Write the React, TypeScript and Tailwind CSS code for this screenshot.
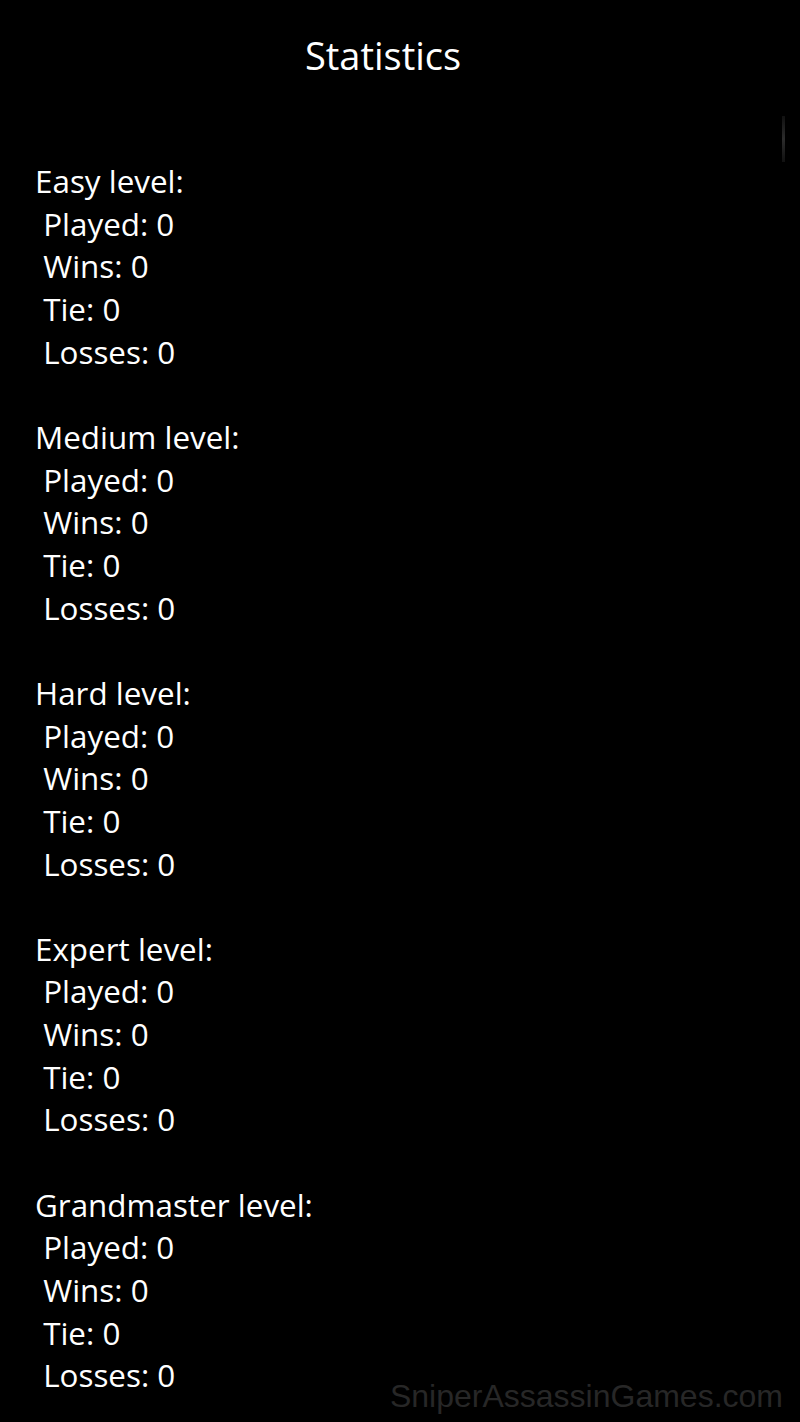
import React from "react";

const levels = ["Easy", "Medium", "Hard", "Expert", "Grandmaster"];

const App: React.FC = () => {
    return (
        <div className="relative min-h-[1422px] w-full bg-black text-white font-['Open_Sans',sans-serif]">
            <div className="pt-[32px] pr-[34px] text-center text-[38px] leading-[46px]">Statistics</div>

            <div className="absolute right-[15px] top-[116px] h-[46px] w-[3px] bg-gradient-to-b from-[#111] via-[#2c2c2c] to-[#111]" />

            <div className="pt-[82px] pl-[35px] text-[31.4px] leading-[42.66px] whitespace-pre">
                {levels.map((level, i) => (
                    <div key={level}>
                        <div>{level} level:</div>
                        <div> Played: 0</div>
                        <div> Wins: 0</div>
                        <div> Tie: 0</div>
                        <div> Losses: 0</div>
                        {i < levels.length - 1 && <div>&nbsp;</div>}
                    </div>
                ))}
            </div>

            <div className="absolute bottom-[10px] right-[17px] text-[32px] leading-none text-[#272727] font-['Liberation_Sans',sans-serif]">
                SniperAssassinGames.com
            </div>
        </div>
    );
};

export default App;
